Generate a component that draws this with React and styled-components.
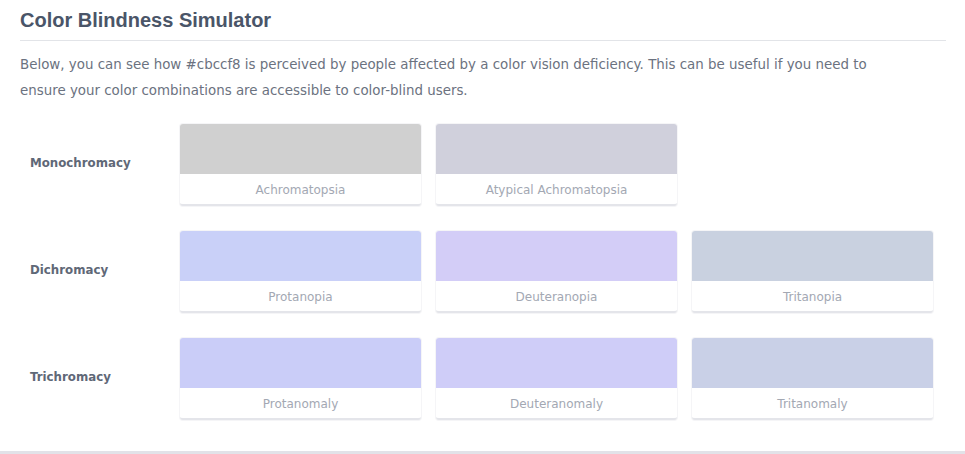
import React from 'react'
import styled, { createGlobalStyle } from 'styled-components';

const Global = createGlobalStyle`
  body {
    margin: 0;
    background: #fff;
    font-family: "DejaVu Sans", Verdana, sans-serif;
  }
`;

const Panel = styled.section`
  box-sizing: border-box;
  width: 965px;
  height: 454px;
  padding: 8px 19px 0 20px;
  background: #fff;
  border-bottom: 3px solid #e2e2e8;
`;

const Heading = styled.h2`
  margin: 0;
  padding-bottom: 8px;
  border-bottom: 1px solid #e2e4e8;
  font-family: "Liberation Sans", Arial, sans-serif;
  font-size: 20px;
  line-height: 24px;
  font-weight: 700;
  color: #4a5568;
`;

const Intro = styled.p`
  max-width: 880px;
  margin: 11px 0 20px;
  font-size: 13.4px;
  line-height: 26px;
  color: #6b7280;
`;

const Rows = styled.div`
  display: flex;
  flex-direction: column;
  gap: 25px;
`;

const Row = styled.div`
  display: grid;
  grid-template-columns: 135px repeat(3, 241px);
  column-gap: 15px;
  align-items: center;
  padding-left: 10px;
`;

const Label = styled.div`
  padding-bottom: 4px;
  font-size: 11.8px;
  font-weight: 700;
  color: #5f6877;
`;

const Card = styled.div`
  border-radius: 3px;
  overflow: hidden;
  background: #fff;
  box-shadow: 0 0 0 1px #f5f5f7;
  border-bottom: 2px solid #e4e5ea;
`;

const Swatch = styled.div`
  height: 50px;
  background: ${p => p.color};
`;

const Caption = styled.div`
  height: 30px;
  line-height: 32px;
  text-align: center;
  font-size: 12px;
  color: #a3a8b3;
`;

const groups = [
  {
    name: 'Monochromacy',
    items: [
      ['Achromatopsia', '#d0d0d0'],
      ['Atypical Achromatopsia', '#d0d0dc'],
    ],
  },
  {
    name: 'Dichromacy',
    items: [
      ['Protanopia', '#c9d0f8'],
      ['Deuteranopia', '#d3cdf7'],
      ['Tritanopia', '#c9d1e0'],
    ],
  },
  {
    name: 'Trichromacy',
    items: [
      ['Protanomaly', '#cacdf8'],
      ['Deuteranomaly', '#cfcdf8'],
      ['Tritanomaly', '#c9d0e7'],
    ],
  },
];

function App() {
  return (
    <>
      <Global />
      <Panel>
        <Heading>Color Blindness Simulator</Heading>
        <Intro>
          Below, you can see how #cbccf8 is perceived by people affected by a color vision deficiency. This can be useful if you need to ensure your color combinations are accessible to color-blind users.
        </Intro>
        <Rows>
          {groups.map(g => (
            <Row key={g.name}>
              <Label>{g.name}</Label>
              {g.items.map(([name, color]) => (
                <Card key={name}>
                  <Swatch color={color} />
                  <Caption>{name}</Caption>
                </Card>
              ))}
            </Row>
          ))}
        </Rows>
      </Panel>
    </>
  )
}

export default App
